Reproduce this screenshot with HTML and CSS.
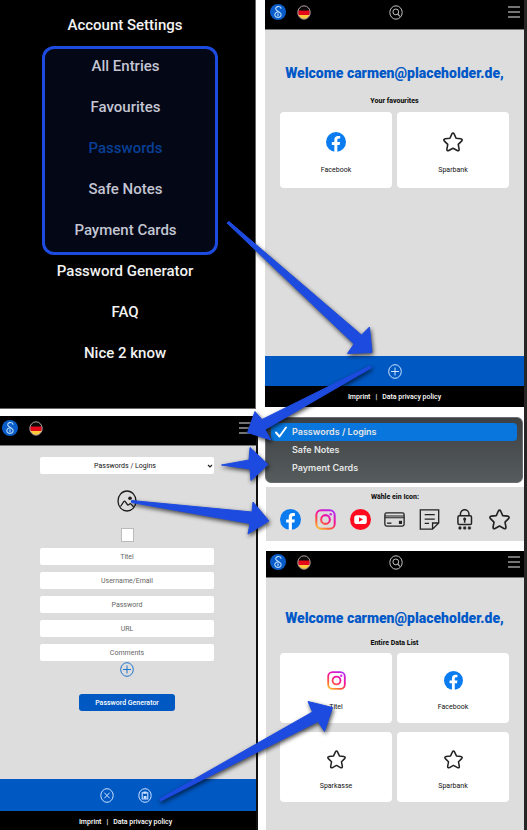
FILE: index.html
```html
<!DOCTYPE html>
<html lang="en">
<head>
<meta charset="utf-8">
<meta name="viewport" content="width=device-width, initial-scale=1">
<title>Password manager walkthrough</title>
<link rel="stylesheet" href="styles.css">
</head>
<body>
<svg class="defs" aria-hidden="true">
  <defs>
    <linearGradient id="insta" gradientUnits="userSpaceOnUse" x1="4" y1="24" x2="18" y2="0">
      <stop offset="0" stop-color="#ffc82c"/>
      <stop offset="0.3" stop-color="#ff5a3c"/>
      <stop offset="0.6" stop-color="#f5129c"/>
      <stop offset="1" stop-color="#b02df5"/>
    </linearGradient>
    <clipPath id="flag-clip"><ellipse cx="7" cy="7.5" rx="6" ry="6.5"/></clipPath>
    <symbol id="logo" viewBox="0 0 16 16">
      <circle cx="8" cy="8" r="8" fill="#0a5cc8"/>
      <path d="M11 4.2C10.4 2.6 8.8 2.3 7.6 2.6 5.600 3.100 5.100 5 6.500 6.200L10 8.700C12.300 10.600 10.900 13.400 8 13.400S3.800 10.600 5.600 8.800C6.300 8.100 7.300 7.900 8.300 8" fill="none" stroke="#b9dcff" stroke-width="1.100" stroke-linecap="round"/>
      <path d="M8 9.800v1.700" stroke="#b9dcff" stroke-width="1.200" stroke-linecap="round"/>
    </symbol>
    <symbol id="flag" viewBox="0 0 14 15">
      <g clip-path="url(#flag-clip)">
        <path d="M0 0h14v5.500H0z" fill="#0b0b0b"/>
        <path d="M0 5.500h14v4.500H0z" fill="#e5091c"/>
        <path d="M0 10h14v5H0z" fill="#ffc93a"/>
      </g>
      <ellipse cx="7" cy="7.500" rx="6.200" ry="6.700" fill="none" stroke="#c9b9b4" stroke-width="0.900"/>
    </symbol>
    <symbol id="search" viewBox="0 0 14 15">
      <ellipse cx="7" cy="7.500" rx="6.200" ry="6.700" fill="none" stroke="#c4c4c4" stroke-width="1"/>
      <circle cx="6.800" cy="6.900" r="2.900" fill="none" stroke="#c4c4c4" stroke-width="1"/>
      <path d="M8.900 9.200l1.900 2.200" stroke="#c4c4c4" stroke-width="1.100"/>
    </symbol>
    <symbol id="burger" viewBox="0 0 12 12">
      <path d="M0 1h12M0 6h12M0 11h12" stroke="#9a9a9a" stroke-width="1.300"/>
    </symbol>
    <symbol id="facebook" viewBox="0 0 24 24">
      <circle cx="12" cy="12" r="12" fill="#0a7cf0"/>
      <path d="M10 24v-8.500H7V12h3V9.400C10 6.300 11.800 4.700 14.600 4.700c1.300 0 2.400.2 2.400.2v3h-1.500c-1.500 0-1.900.9-1.900 1.900V12h3.300l-.5 3.500h-2.800V24z" fill="#fff"/>
    </symbol>
    <symbol id="instagram" viewBox="0 0 24 24">
      <rect x="1.500" y="1.500" width="21" height="21" rx="5.500" fill="none" stroke="url(#insta)" stroke-width="2.300"/>
      <circle cx="12" cy="12" r="5" fill="none" stroke="url(#insta)" stroke-width="2.300"/>
      <circle cx="18" cy="6" r="1.500" fill="#d22be0"/>
    </symbol>
    <symbol id="youtube" viewBox="0 0 24 24">
      <circle cx="12" cy="12" r="12" fill="#ff0a1e"/>
      <rect x="4.800" y="7" width="14.400" height="10.200" rx="3" fill="#fff"/>
      <path d="M10.300 9.500v5.200l4.500-2.600z" fill="#ff0a1e"/>
    </symbol>
    <symbol id="card" viewBox="0 0 24 24">
      <g fill="none" stroke="#222" stroke-width="1.500">
        <rect x="1" y="4.500" width="22" height="15" rx="2"/>
        <path d="M1 8h22M1 10h22" stroke-width="1.300"/>
        <path d="M3.500 16.200h5"/>
      </g>
      <rect x="17" y="13.500" width="3.600" height="3.600" fill="#222"/>
    </symbol>
    <symbol id="note" viewBox="0 0 24 24">
      <g fill="none" stroke="#222" stroke-width="1.500">
        <path d="M1.500 1h21v15l-7 7h-14zM22.500 16h-7v7"/>
        <path d="M6.500 6.500h11.500M6.500 11.500h11.500M6.500 16.500h5"/>
      </g>
    </symbol>
    <symbol id="lock" viewBox="0 0 24 24">
      <g fill="none" stroke="#222" stroke-width="1.700">
        <rect x="4.500" y="7.800" width="15.500" height="10" rx="1.500"/>
        <path d="M7.300 7.800V5.700a4.900 4.900 0 0 1 9.800 0v2.100"/>
      </g>
      <path d="M12.200 9.800a1.800 1.800 0 0 1 .9 3.300v2.700h-1.800v-2.700a1.800 1.800 0 0 1 .9-3.300z" fill="#222"/>
      <path d="M4.800 21.600h4M5.800 19.900l2 3.400M7.800 19.900l-2 3.400M10.200 21.600h4M11.200 19.900l2 3.400M13.200 19.900l-2 3.400M15.600 21.600h4M16.600 19.900l2 3.400M18.600 19.900l-2 3.400" stroke="#222" stroke-width="1.200"/>
    </symbol>
    <symbol id="star" viewBox="0 0 24 24">
      <path d="M12 1.200c.7 0 1 .5 1.300 1.100l2.400 5.200 5.600.7c1.700.2 2.200 1.500 1 2.700l-4 4 1 5.600c.3 1.700-.8 2.500-2.200 1.700L12 19.500l-5.100 2.700c-1.400.8-2.500 0-2.200-1.700l1-5.600-4-4c-1.200-1.200-.7-2.500 1-2.700l5.600-.7 2.400-5.200c.3-.6.600-1.100 1.300-1.100z" fill="none" stroke="#222" stroke-width="1.900" stroke-linejoin="round"/>
    </symbol>
    <symbol id="plus" viewBox="0 0 14 15">
      <ellipse cx="7" cy="7.500" rx="6.300" ry="6.800" fill="none" stroke="currentColor" stroke-width="1"/>
      <path d="M3 7.500h8M7 3.500v8" stroke="currentColor" stroke-width="1"/>
    </symbol>
    <symbol id="cancel" viewBox="0 0 14 15">
      <ellipse cx="7" cy="7.500" rx="6.200" ry="6.800" fill="none" stroke="currentColor" stroke-width="1"/>
      <path d="M4.300 4.700l5.400 5.600M9.700 4.700l-5.400 5.600" stroke="currentColor" stroke-width="1"/>
    </symbol>
    <symbol id="save" viewBox="0 0 14 15">
      <ellipse cx="7" cy="7.500" rx="6.200" ry="6.800" fill="none" stroke="currentColor" stroke-width="1"/>
      <path d="M4.200 4.800h5.600v6.200H4.200z" fill="none" stroke="currentColor" stroke-width="1.100"/>
      <path d="M5.500 3.600h3v2.200h-3zM5.700 8h2.800v2.800H5.700z" fill="currentColor"/>
    </symbol>
    <symbol id="picture" viewBox="0 0 20 22">
      <ellipse cx="10" cy="11" rx="9" ry="10" fill="none" stroke="#1c1c1c" stroke-width="1.300"/>
      <path d="M3.500 16.500l3.300-4.800c.5-.7 1-.7 1.500 0l2 2.800c.5.700.9.600 1.400.2l1-.8c.5-.4 1-.3 1.400.2l2.400 2.800" fill="none" stroke="#1c1c1c" stroke-width="1.300"/>
      <circle cx="13" cy="8.300" r="1.800" fill="#1c1c1c"/>
    </symbol>
  </defs>
</svg>

<div class="board">
  <div class="column">
    <nav class="menu" aria-label="Main menu">
      <a href="#">Account Settings</a>
      <div class="menu-group">
        <a href="#">All Entries</a>
        <a href="#">Favourites</a>
        <a href="#" class="current">Passwords</a>
        <a href="#">Safe Notes</a>
        <a href="#">Payment Cards</a>
      </div>
      <a href="#">Password Generator</a>
      <a href="#">FAQ</a>
      <a href="#">Nice 2 know</a>
    </nav>

    <section class="app app-form">
      <header class="topbar">
        <svg class="logo"><use href="#logo"/></svg>
        <svg class="flag"><use href="#flag"/></svg>
        <button class="burger" aria-label="Menu"><svg><use href="#burger"/></svg></button>
      </header>
      <form class="entry">
        <div class="select-wrap">
          <select class="field" aria-label="Entry type">
            <option>Passwords / Logins</option>
            <option>Safe Notes</option>
            <option>Payment Cards</option>
          </select>
          <svg class="chevron" viewBox="0 0 6 4"><path d="M1 1l2 2 2-2" fill="none" stroke="#222" stroke-width="1.200"/></svg>
        </div>
        <button type="button" class="pick" aria-label="Choose icon"><svg><use href="#picture"/></svg></button>
        <input class="fav" type="checkbox" aria-label="Favourite">
        <div class="fields">
          <input class="field" type="text" placeholder="Titel" aria-label="Titel">
          <input class="field" type="text" placeholder="Username/Email" aria-label="Username/Email">
          <input class="field" type="text" placeholder="Password" aria-label="Password">
          <input class="field" type="text" placeholder="URL" aria-label="URL">
          <input class="field" type="text" placeholder="Comments" aria-label="Comments">
        </div>
        <button type="button" class="round add-field" aria-label="Add field"><svg><use href="#plus"/></svg></button>
        <button type="button" class="generate">Password Generator</button>
      </form>
      <div class="actions">
        <button class="round" aria-label="Cancel"><svg><use href="#cancel"/></svg></button>
        <button class="round" aria-label="Save"><svg><use href="#save"/></svg></button>
      </div>
      <footer class="legal"><a href="#">Imprint</a><span>|</span><a href="#">Data privacy policy</a></footer>
    </section>
  </div>

  <div class="column">
    <section class="app app-home">
      <header class="topbar">
        <svg class="logo"><use href="#logo"/></svg>
        <svg class="flag"><use href="#flag"/></svg>
        <button class="round search" aria-label="Search"><svg><use href="#search"/></svg></button>
        <button class="burger" aria-label="Menu"><svg><use href="#burger"/></svg></button>
      </header>
      <main class="content">
        <h1>Welcome carmen@placeholder.de,</h1>
        <h2>Your favourites</h2>
        <div class="cards">
          <a href="#" class="card"><svg><use href="#facebook"/></svg>Facebook</a>
          <a href="#" class="card"><svg><use href="#star"/></svg>Sparbank</a>
        </div>
      </main>
      <div class="actions">
        <button class="round" aria-label="Add entry"><svg><use href="#plus"/></svg></button>
      </div>
      <footer class="legal"><a href="#">Imprint</a><span>|</span><a href="#">Data privacy policy</a></footer>
    </section>

    <ul class="popup" role="listbox" aria-label="Entry type options">
      <li role="option" aria-selected="true"><svg viewBox="0 0 12 12"><path d="M1 6.500l3.500 4L11 1.500" fill="none" stroke="#fff" stroke-width="1.900" stroke-linecap="round" stroke-linejoin="round"/></svg>Passwords / Logins</li>
      <li role="option">Safe Notes</li>
      <li role="option">Payment Cards</li>
    </ul>

    <section class="picker">
      <h2>Wähle ein Icon:</h2>
      <div class="icons">
        <button aria-label="Facebook"><svg><use href="#facebook"/></svg></button>
        <button aria-label="Instagram"><svg><use href="#instagram"/></svg></button>
        <button aria-label="YouTube"><svg><use href="#youtube"/></svg></button>
        <button aria-label="Card"><svg><use href="#card"/></svg></button>
        <button aria-label="Note"><svg><use href="#note"/></svg></button>
        <button aria-label="Lock"><svg><use href="#lock"/></svg></button>
        <button aria-label="Star"><svg><use href="#star"/></svg></button>
      </div>
    </section>

    <section class="app app-list">
      <header class="topbar">
        <svg class="logo"><use href="#logo"/></svg>
        <svg class="flag"><use href="#flag"/></svg>
        <button class="round search" aria-label="Search"><svg><use href="#search"/></svg></button>
        <button class="burger" aria-label="Menu"><svg><use href="#burger"/></svg></button>
      </header>
      <div class="content">
        <h1>Welcome carmen@placeholder.de,</h1>
        <h2>Entire Data List</h2>
        <div class="cards">
          <a href="#" class="card"><svg><use href="#instagram"/></svg>Titel</a>
          <a href="#" class="card"><svg><use href="#facebook"/></svg>Facebook</a>
          <a href="#" class="card"><svg><use href="#star"/></svg>Sparkasse</a>
          <a href="#" class="card"><svg><use href="#star"/></svg>Sparbank</a>
        </div>
      </div>
    </section>
  </div>

  <svg class="arrows" viewBox="0 0 527 830" preserveAspectRatio="none" aria-hidden="true">
    <path d="M227 223L229 221.500 361.500 335 369.500 327 372 352.500 347.500 353.500 354 344z"/>
    <path d="M370 366L371 368 265 429.500 271 440 247.500 432.500 255 411.500 262 419.500z"/>
    <path d="M221.500 465L249 460 250 447.500 268 464.500 251 480.500 250 469z"/>
    <path d="M131.500 500.500L252 512 253 502 269 521 248 534 250 523.500 131.500 502.500z"/>
    <path d="M159.500 799L312.500 712 308 701.500 332.500 707.500 324.500 731.500 318 721.500 160.500 801z"/>
  </svg>
</div>
</body>
</html>
```
FILE: styles.css
```css
* {
  box-sizing: border-box;
}

body {
  margin: 0;
  background: #fff;
  color: #111;
  font-family: Roboto, "Liberation Sans", sans-serif;
  font-size: 7px;
  line-height: 10px;
}

a {
  color: inherit;
  text-decoration: none;
}

button {
  display: flex;
  align-items: center;
  justify-content: center;
  padding: 0;
  border: 0;
  background: none;
  color: inherit;
  font: inherit;
}

.defs {
  position: absolute;
  width: 0;
  height: 0;
}

.board {
  position: relative;
  display: grid;
  grid-template-columns: minmax(0, 258fr) minmax(0, 259fr);
  column-gap: 7px;
  min-height: 100vh;
  border-right: 3px solid #262626;
}

.column {
  display: flex;
  flex-direction: column;
}

.arrows {
  position: absolute;
  top: 0;
  left: 0;
  width: calc(100% + 3px);
  height: 100%;
  fill: #1d4be0;
  stroke: #1d4be0;
  stroke-width: 1;
  stroke-linejoin: round;
  filter: drop-shadow(1px 2px 2px rgba(0, 0, 0, 0.7));
  pointer-events: none;
}

/* Menu */
.menu {
  margin: 0 2px 7px 0;
  padding: 5px 5px 34px 0;
  background: #000;
  border-right: 1px solid #666;
  border-bottom: 1px solid #666;
  color: #f2f2f2;
  font-size: 15px;
  font-weight: 500;
  text-align: center;
}

.menu a {
  display: block;
  line-height: 41px;
}

.menu-group {
  margin: 0 32px -4px 42px;
  padding: 0 9px 4px 0;
  border-radius: 12px;
  background: #040716;
  box-shadow: inset 0 0 0 3px #1d4be0;
  color: #c3c5d2;
}

.menu-group .current {
  color: #083f94;
}

/* App shell */
.app {
  display: flex;
  flex-direction: column;
  background: #ddd;
}

.topbar {
  display: grid;
  grid-template-columns: 16px 14px 1fr 14px;
  align-items: start;
  column-gap: 11px;
  height: 30px;
  padding: 4px 4px 0 5px;
  border-bottom: 1px solid #777;
  background: #000;
}

.logo {
  width: 16px;
  height: 16px;
}

.flag {
  width: 14px;
  height: 15px;
  margin-top: 1px;
}

.burger {
  grid-column: 4;
  justify-self: end;
  width: 12px;
  height: 16px;
}

.burger svg {
  width: 12px;
  height: 12px;
}

.round svg {
  display: block;
  width: 14px;
  height: 15px;
}

.search {
  justify-self: center;
  margin: 1px 25px 0 0;
}

.actions {
  display: flex;
  align-items: center;
  justify-content: center;
  gap: 24px;
  height: 30px;
  background: #0058c2;
  color: #cfe4ff;
}

.legal {
  display: flex;
  align-items: center;
  justify-content: center;
  gap: 5px;
  height: 21px;
  background: #000;
  color: #fff;
  font-weight: 500;
}

/* Home and list */
.content {
  flex: 1;
  padding: 0 15px;
  text-align: center;
}

h1 {
  margin: 0 -10px;
  color: #0058c8;
  font-size: 14px;
  font-weight: 900;
  line-height: 20px;
}

h2 {
  margin: 0;
  font-size: 7px;
  font-weight: 800;
  line-height: 10px;
}

.cards {
  display: grid;
  grid-template-columns: 1fr 1fr;
  gap: 9px 5px;
}

.card {
  display: flex;
  flex-direction: column;
  align-items: center;
  justify-content: space-between;
  height: 76px;
  padding: 20px 0 13px;
  border-radius: 4px;
  background: #fff;
}

.card svg {
  width: 20px;
  height: 20px;
}

.app-home {
  height: 407px;
  margin-bottom: 10px;
}

.app-home .content {
  padding-top: 33px;
}

.app-home h2 {
  margin: 13px 0 6px;
}

.app-list {
  flex: 1;
  margin-left: 1px;
}

.app-list .topbar {
  height: 27px;
  padding: 3px 4px 0;
}

.app-list .content {
  padding: 30px 15px 28px 14px;
}

.app-list h2 {
  margin: 10px 0 5px;
}

.app-list .card {
  height: 70px;
  padding: 18px 0 11px;
}

.app-list .card svg {
  width: 19px;
  height: 19px;
}

/* Type popup */
.popup {
  margin: 0 1px 4px 0;
  padding: 5px;
  height: 66px;
  border: 1px solid #6b6e70;
  border-radius: 6px;
  background: linear-gradient(#3d4143, #565b5c);
  color: #e4e6e7;
  font-family: Inter, "Liberation Sans", sans-serif;
  font-size: 9px;
  font-weight: 600;
  line-height: 18px;
  list-style: none;
}

.popup li {
  position: relative;
  padding-left: 21px;
  border-radius: 4px;
}

.popup li[aria-selected="true"] {
  background: #0876dc;
}

.popup svg {
  position: absolute;
  top: 3px;
  left: 4px;
  width: 12px;
  height: 12px;
}

/* Icon picker */
.picker {
  height: 54px;
  margin: 0 0 10px 1px;
  padding: 5px 14px 0;
  background: #ddd;
  text-align: center;
}

.icons {
  display: flex;
  justify-content: space-between;
  margin-top: 7px;
}

.icons svg {
  width: 21px;
  height: 21px;
}

/* Entry form */
.app-form {
  flex: 1;
  border-right: 2px solid #111;
}

.app-form .topbar {
  padding: 4px 5px 0 2px;
}

.entry {
  display: flex;
  flex: 1;
  flex-direction: column;
  align-items: center;
  padding: 11px 42px 0 40px;
}

.select-wrap {
  position: relative;
  width: 100%;
}

.chevron {
  position: absolute;
  top: 7px;
  right: 1px;
  width: 6px;
  height: 4px;
}

.field {
  display: block;
  width: 100%;
  height: 17px;
  padding: 0 8px;
  border: 0;
  border-radius: 2px;
  background: #fff;
  color: #111;
  font: inherit;
  text-align: center;
}

select.field {
  padding-right: 12px;
  appearance: none;
  text-align-last: center;
}

.field::placeholder {
  color: #666;
}

.pick {
  margin-top: 16px;
}

.pick svg {
  width: 20px;
  height: 22px;
}

.fav {
  width: 13px;
  height: 14px;
  margin: 16px 0 6px;
  appearance: none;
  border: 1px solid #bbb;
  background: #fff;
}

.fields {
  display: grid;
  gap: 7px;
  width: 100%;
}

.add-field {
  margin-top: 1px;
  color: #1f74cc;
}

.generate {
  width: 96px;
  height: 17px;
  margin-top: 17px;
  border-radius: 3px;
  background: #0058c2;
  color: #fff;
  font-weight: 500;
}

.app-form .actions {
  height: 32px;
  padding-right: 4px;
}

.app-form .legal {
  height: 19px;
  padding: 3px 5px 0 0;
}
```
